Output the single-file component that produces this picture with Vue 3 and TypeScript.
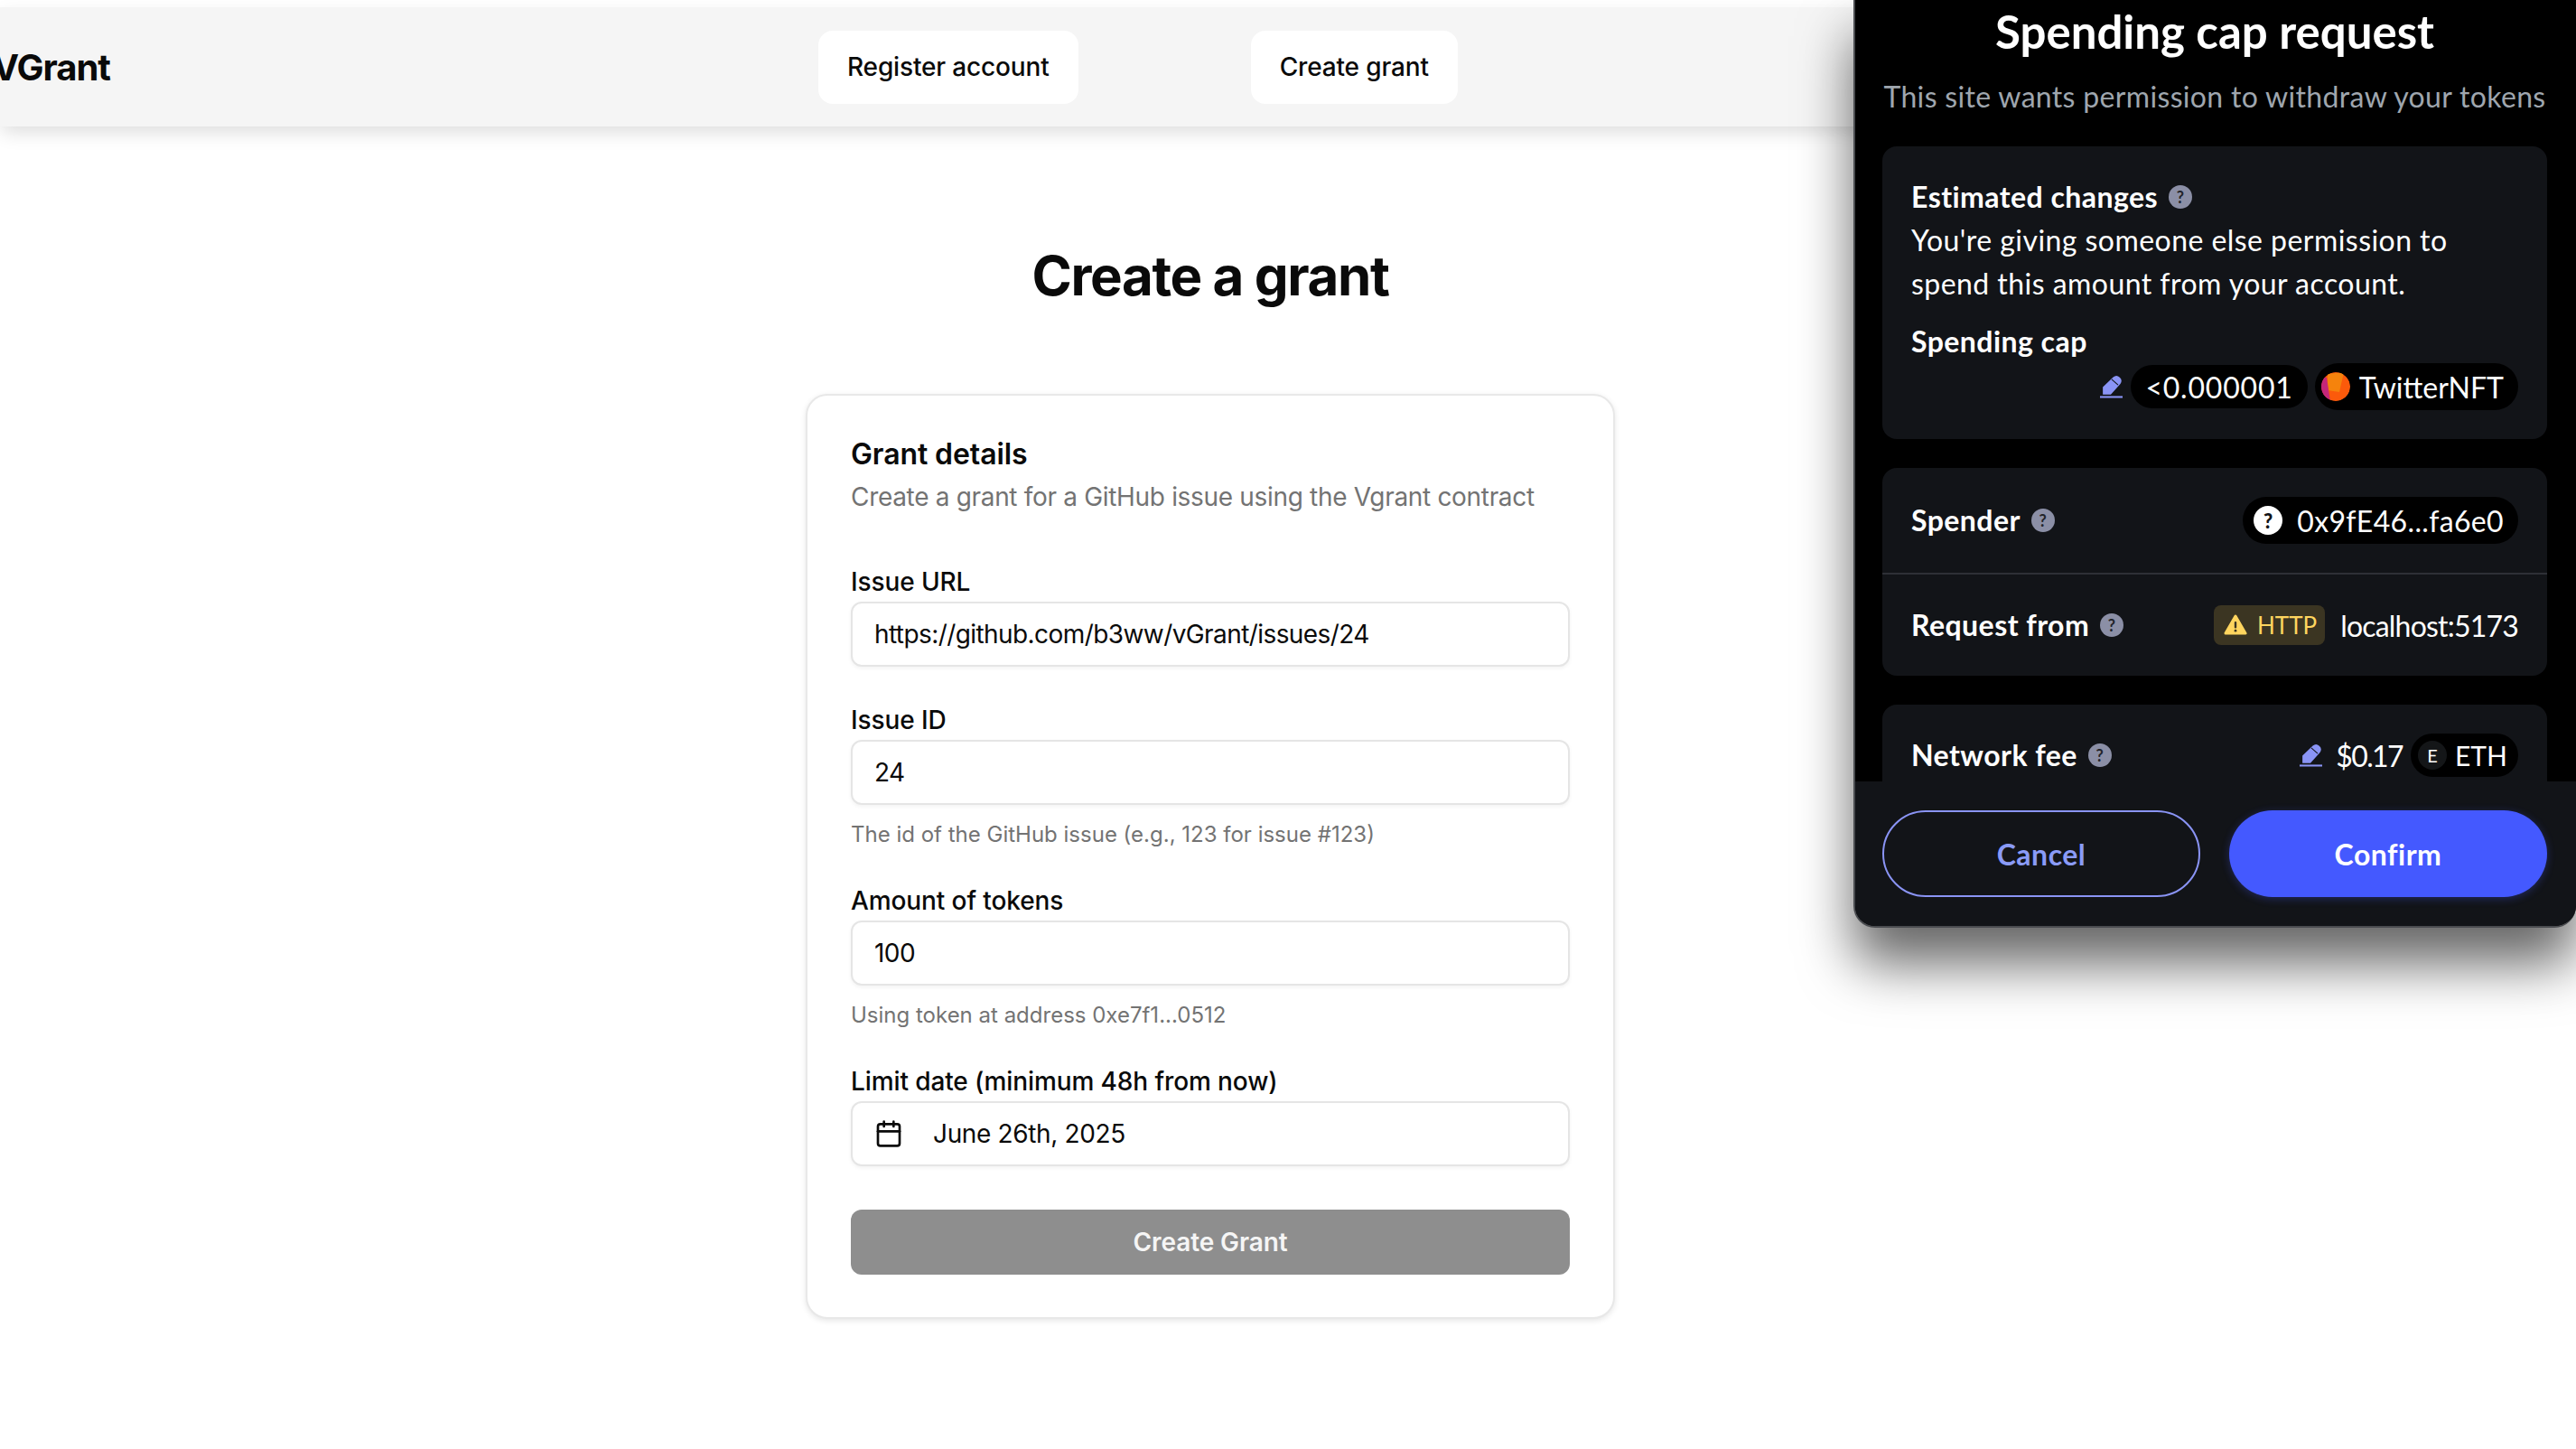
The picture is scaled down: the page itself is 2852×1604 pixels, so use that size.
<template>
  <div class="page">
    <header class="topbar">
      <div class="logo">VGrant</div>
      <nav class="nav">
        <button class="nav-btn">Register account</button>
        <button class="nav-btn">Create grant</button>
      </nav>
    </header>

    <main class="main">
      <h1 class="page-title">Create a grant</h1>

      <section class="card">
        <h2 class="card-title">Grant details</h2>
        <p class="card-desc">Create a grant for a GitHub issue using the Vgrant contract</p>

        <div class="fields">
          <div v-for="field in fields" :key="field.label" class="field">
            <label class="field-label">{{ field.label }}</label>
            <div class="input">{{ field.value }}</div>
            <p v-if="field.help" class="field-help">{{ field.help }}</p>
          </div>

          <div class="field">
            <label class="field-label">Limit date (minimum 48h from now)</label>
            <div class="input input-date">
              <svg class="calendar" viewBox="0 0 24 24" fill="none" stroke="currentColor" stroke-width="2" stroke-linecap="round" stroke-linejoin="round">
                <path d="M8 2v4" />
                <path d="M16 2v4" />
                <rect x="3" y="4" width="18" height="18" rx="2" />
                <path d="M3 10h18" />
              </svg>
              June 26th, 2025
            </div>
          </div>
        </div>

        <button class="submit">Create Grant</button>
      </section>
    </main>

    <!-- wallet popup over the page -->
    <aside class="wallet">
      <div class="wallet-scroll">
        <h2 class="wallet-title">Spending cap request</h2>
        <p class="wallet-sub">This site wants permission to withdraw your tokens</p>

        <div class="box box-changes">
          <div class="label-line">Estimated changes <span class="help">?</span></div>
          <p class="changes-text">You're giving someone else permission to spend this amount from your account.</p>
          <div class="label-line cap-label">Spending cap</div>
          <div class="cap-row">
            <svg class="pencil" viewBox="0 0 24 24" fill="currentColor">
              <path d="M14 2a5.2 5.2 0 0 1 7.6 7L11.5 20.5H3v-8z" />
              <path d="M12.4 4.2l6.8 6" stroke="#121418" stroke-width="1" />
              <rect x="0" y="22" width="24" height="2" />
            </svg>
            <span class="pill pill-amount">&lt;0.000001</span>
            <span class="pill pill-token">
              <svg class="token" viewBox="0 0 32 32">
                <circle cx="16" cy="16" r="16" fill="#fb5a0b" />
                <path d="M7 2 L25 0 L20 22 L7 20 Z" fill="#f5830c" />
                <path d="M0 6 H6 L10 32 H0 Z" fill="#c4267a" />
              </svg>
              TwitterNFT
            </span>
          </div>
        </div>

        <div class="box">
          <div class="row row-split">
            <div class="label-line">Spender <span class="help">?</span></div>
            <span class="pill pill-spender"><span class="unknown">?</span>0x9fE46...fa6e0</span>
          </div>
          <div class="row">
            <div class="label-line">Request from <span class="help">?</span></div>
            <div class="origin">
              <span class="http">
                <svg class="warn" viewBox="0 0 26 24">
                  <path d="M13 2 L24 21 H2 Z" fill="#ffd55f" stroke="#ffd55f" stroke-width="3" stroke-linejoin="round" />
                  <rect x="11.8" y="8" width="2.4" height="7.5" rx="1" fill="#3b3522" />
                  <circle cx="13" cy="18.2" r="1.4" fill="#3b3522" />
                </svg>
                HTTP
              </span>
              <span class="host">localhost:5173</span>
            </div>
          </div>
        </div>

        <div class="box">
          <div class="row">
            <div class="label-line">Network fee <span class="help">?</span></div>
            <div class="fee">
              <svg class="pencil" viewBox="0 0 24 24" fill="currentColor">
                <path d="M14 2a5.2 5.2 0 0 1 7.6 7L11.5 20.5H3v-8z" />
                <path d="M12.4 4.2l6.8 6" stroke="#121418" stroke-width="1" />
                <rect x="0" y="22" width="24" height="2" />
              </svg>
              <span class="fee-value">$0.17</span>
              <span class="pill pill-eth"><span class="eth-dot">E</span>ETH</span>
            </div>
          </div>
        </div>
      </div>

      <footer class="wallet-footer">
        <button class="btn-cancel">Cancel</button>
        <button class="btn-confirm">Confirm</button>
      </footer>
    </aside>
  </div>
</template>

<script setup lang="ts">
interface Field {
  label: string;
  value: string;
  help?: string;
}

const fields: Field[] = [
  { label: 'Issue URL', value: 'https://github.com/b3ww/vGrant/issues/24' },
  { label: 'Issue ID', value: '24', help: 'The id of the GitHub issue (e.g., 123 for issue #123)' },
  { label: 'Amount of tokens', value: '100', help: 'Using token at address 0xe7f1...0512' }
];
</script>

<style>
html,
body {
  margin: 0;
  background: #fff;
  overflow: hidden;
}
</style>

<style scoped>
.page {
  position: relative;
  width: 2852px;
  height: 1604px;
  overflow: hidden;
  padding-top: 8px;
  box-sizing: border-box;
  background: #fff;
  font-family: Inter, "Liberation Sans", sans-serif;
  color: #0a0a0a;
}

button {
  border: none;
  font-family: inherit;
}

/* top bar */
.topbar {
  display: flex;
  align-items: center;
  height: 132px;
  background: #f5f5f5;
  box-shadow: 0 8px 20px -2px rgba(0, 0, 0, 0.14);
}

.logo {
  width: 122px;
  margin-right: 784px;
  font-size: 40px;
  font-weight: 700;
  letter-spacing: -1px;
  white-space: nowrap;
  direction: rtl;
}

.nav {
  display: flex;
  gap: 191px;
}

.nav-btn {
  height: 81px;
  padding: 0 32px;
  background: #fff;
  border-radius: 16px;
  font-size: 28px;
  font-weight: 500;
  letter-spacing: -0.15px;
  color: #0a0a0a;
}

/* form */
.main {
  display: flex;
  flex-direction: column;
  align-items: center;
  width: 2680px;
}

.page-title {
  margin: 129px 0 95px;
  font-size: 60px;
  line-height: 72px;
  font-weight: 700;
  letter-spacing: -1.4px;
}

.card {
  width: 896px;
  box-sizing: border-box;
  padding: 45px 48px 47px;
  background: #fff;
  border: 2px solid #e8e8e8;
  border-radius: 24px;
  box-shadow: 0 2px 6px rgba(0, 0, 0, 0.1);
}

.card-title {
  margin: 0;
  font-size: 32px;
  line-height: 40px;
  font-weight: 600;
  letter-spacing: -0.1px;
}

.card-desc {
  margin: 7px 0 60px;
  font-size: 28px;
  line-height: 40px;
  letter-spacing: -0.32px;
  color: #737373;
}

.fields {
  display: flex;
  flex-direction: column;
  gap: 45px;
}

.field-label {
  display: block;
  margin-bottom: 8px;
  font-size: 28px;
  line-height: 28px;
  font-weight: 500;
  letter-spacing: -0.1px;
}

.input {
  display: flex;
  align-items: center;
  height: 72px;
  box-sizing: border-box;
  padding: 0 24px;
  border: 2px solid #e5e5e5;
  border-radius: 12px;
  background: #fff;
  box-shadow: 0 2px 4px rgba(0, 0, 0, 0.05);
  font-size: 28px;
  letter-spacing: -0.58px;
}

.input-date {
  gap: 33px;
  letter-spacing: -0.35px;
}

.calendar {
  width: 32px;
  height: 32px;
  flex: none;
}

.field-help {
  margin: 19px 0 0;
  font-size: 24px;
  line-height: 28px;
  color: #737373;
}

.submit {
  display: block;
  width: 100%;
  height: 72px;
  margin-top: 48px;
  background: #8e8e8e;
  border-radius: 12px;
  font-size: 28px;
  font-weight: 600;
  letter-spacing: -0.1px;
  color: #f5f5f5;
}

/* wallet popup */
.wallet {
  position: absolute;
  top: 0;
  right: 0;
  display: flex;
  flex-direction: column;
  width: 800px;
  height: 1027px;
  box-sizing: border-box;
  overflow: hidden;
  background: #000;
  border: 2px solid #4a4c50;
  border-top: none;
  border-right: none;
  border-radius: 0 0 24px 24px;
  box-shadow: 0 40px 60px rgba(0, 0, 0, 0.6);
  font-family: Lato, "Liberation Sans", sans-serif;
  color: #fff;
}

.wallet-scroll {
  flex: 1;
  min-height: 0;
  overflow: hidden;
  padding: 0 32px 0 30px;
}

.wallet-title {
  margin: -1px 0 2px;
  font-size: 51px;
  line-height: 72px;
  font-weight: 700;
  text-align: center;
}

.wallet-sub {
  margin: 12px 0 31px;
  font-size: 32px;
  line-height: 48px;
  letter-spacing: 0.33px;
  text-align: center;
  white-space: nowrap;
  color: #9fa6ae;
}

.box {
  margin-bottom: 32px;
  background: #121418;
  border-radius: 16px;
}

.box-changes {
  padding: 32px;
}

.label-line {
  display: flex;
  align-items: center;
  gap: 12px;
  font-size: 32px;
  line-height: 48px;
  font-weight: 700;
  letter-spacing: 0.45px;
}

.help {
  display: inline-flex;
  align-items: center;
  justify-content: center;
  width: 26px;
  height: 26px;
  border-radius: 50%;
  background: #8b8fa6;
  font-size: 18px;
  font-weight: 700;
  color: #22242a;
}

.changes-text {
  width: 620px;
  margin: 0;
  font-size: 32px;
  line-height: 48px;
  letter-spacing: 0.45px;
}

.cap-label {
  margin-top: 16px;
}

.cap-row {
  display: flex;
  align-items: center;
  justify-content: flex-end;
  height: 52px;
  gap: 8px;
  font-size: 32px;
}

.pencil {
  width: 25px;
  height: 26px;
  flex: none;
  margin-right: 1px;
  color: #8a94f5;
}

.pill {
  display: inline-flex;
  align-items: center;
  background: #000;
  border-radius: 999px;
  font-size: 32px;
  white-space: nowrap;
}

.pill-amount {
  height: 48px;
  padding: 0 16px;
  letter-spacing: 0.8px;
}

.pill-token {
  height: 52px;
  padding: 0 16px 0 7px;
  gap: 10px;
}

.token {
  width: 32px;
  height: 32px;
  border-radius: 50%;
}

.row {
  display: flex;
  align-items: center;
  justify-content: space-between;
  padding: 32px;
  min-height: 48px;
}

.row-split {
  border-bottom: 2px solid #2e3036;
}

.pill-spender {
  height: 52px;
  padding: 0 16px 0 12px;
  gap: 16px;
  letter-spacing: 0.35px;
}

.unknown {
  display: inline-flex;
  align-items: center;
  justify-content: center;
  width: 32px;
  height: 32px;
  border-radius: 50%;
  background: #fff;
  font-size: 22px;
  font-weight: 900;
  color: #121418;
}

.origin {
  display: flex;
  align-items: center;
  gap: 17px;
  font-size: 32px;
}

.host {
  letter-spacing: -0.8px;
}

.http {
  display: inline-flex;
  align-items: center;
  height: 44px;
  padding: 0 9px 0 11px;
  gap: 11px;
  border-radius: 8px;
  background: #3b3522;
  font-size: 26px;
  color: #ffd55f;
}

.warn {
  width: 26px;
  height: 24px;
}

.fee {
  display: flex;
  align-items: center;
  font-size: 32px;
}

.fee-value {
  margin: 0 9px 0 14px;
  letter-spacing: -1.6px;
}

.pill-eth {
  height: 48px;
  padding: 0 12px 0 8px;
  gap: 9px;
  font-size: 30px;
}

.eth-dot {
  display: inline-flex;
  align-items: center;
  justify-content: center;
  width: 32px;
  height: 32px;
  border-radius: 50%;
  background: #141618;
  font-size: 20px;
}

.wallet-footer {
  display: flex;
  justify-content: space-between;
  flex: none;
  height: 160px;
  box-sizing: border-box;
  padding: 32px 32px 32px 30px;
  background: #121418;
}

.wallet-footer button {
  width: 352px;
  height: 96px;
  border-radius: 999px;
  font-family: inherit;
  font-size: 32px;
  font-weight: 700;
  letter-spacing: 0.5px;
}

.btn-cancel {
  box-sizing: border-box;
  background: transparent;
  border: 2px solid #8a94f5;
  color: #8a9bf7;
}

.btn-confirm {
  background: #4459ff;
  box-shadow: 0 2px 10px rgba(68, 89, 255, 0.3);
  color: #fff;
}
</style>
